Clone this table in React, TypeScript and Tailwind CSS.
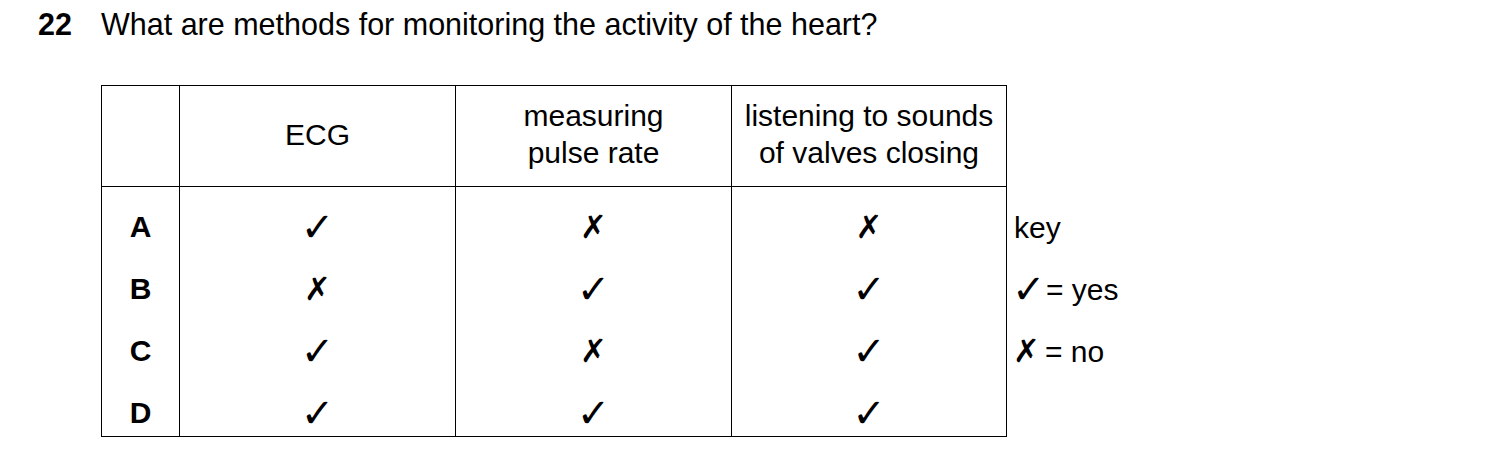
import React from "react";

const Y = () => (
  <span className="font-['DejaVu_Sans',sans-serif] font-bold text-[40px] leading-[40px] h-[40px] flex items-center">✓</span>
);
const N = () => (
  <span className="font-['DejaVu_Sans',sans-serif] font-bold text-[32px] leading-[40px] h-[40px] flex items-center">✗</span>
);

const rows: { l: string; v: boolean[] }[] = [
  { l: "A", v: [true, false, false] },
  { l: "B", v: [false, true, true] },
  { l: "C", v: [true, false, true] },
  { l: "D", v: [true, true, true] },
];

export default function App() {
  return (
    <div className="w-[1500px] h-[456px] bg-white text-black font-['Liberation_Sans',Arial,sans-serif] text-[30px]">
      <div className="flex pt-[7px] leading-[34px] text-[30.5px]">
        <span className="ml-[38px] w-[63px] font-bold">22</span>
        <span>What are methods for monitoring the activity of the heart?</span>
      </div>
      <div className="flex ml-[101px] mt-[44px]">
        <div className="border border-black">
          <div className="grid grid-cols-[78px_276px_276px_274px] h-[101px] border-b border-black leading-[37px] text-center">
            <div className="border-r border-black" />
            <div className="border-r border-black flex items-center justify-center pb-[4px]">ECG</div>
            <div className="border-r border-black flex flex-col items-center justify-center pb-[4px]">
              <span>measuring</span>
              <span>pulse rate</span>
            </div>
            <div className="flex flex-col items-center justify-center pb-[4px]">
              <span>listening to sounds</span>
              <span>of valves closing</span>
            </div>
          </div>
          <div className="grid grid-cols-[78px_276px_276px_274px] h-[249px]">
            <div className="border-r border-black pt-[8px] overflow-hidden">
              {rows.map((r) => (
                <div key={r.l} className="h-[62px] flex items-center justify-center font-bold">
                  {r.l}
                </div>
              ))}
            </div>
            {[0, 1, 2].map((c) => (
              <div
                key={c}
                className={`pt-[9px] overflow-hidden ${c < 2 ? "border-r border-black" : ""}`}
              >
                {rows.map((r) => (
                  <div key={r.l} className="h-[62px] flex items-center justify-center">
                    {r.v[c] ? <Y /> : <N />}
                  </div>
                ))}
              </div>
            ))}
          </div>
        </div>
        <div className="ml-[7px] pt-[111px]">
          <div className="h-[62px] flex items-center">key</div>
          <div className="h-[62px] flex items-center">
            <span className="w-[32px] shrink-0 -ml-[2px]">
              <Y />
            </span>
            <span className="ml-[2px]">= yes</span>
          </div>
          <div className="h-[62px] flex items-center">
            <span className="w-[30px] shrink-0 -ml-[1px]">
              <N />
            </span>
            <span className="ml-[2px]">= no</span>
          </div>
        </div>
      </div>
    </div>
  );
}
